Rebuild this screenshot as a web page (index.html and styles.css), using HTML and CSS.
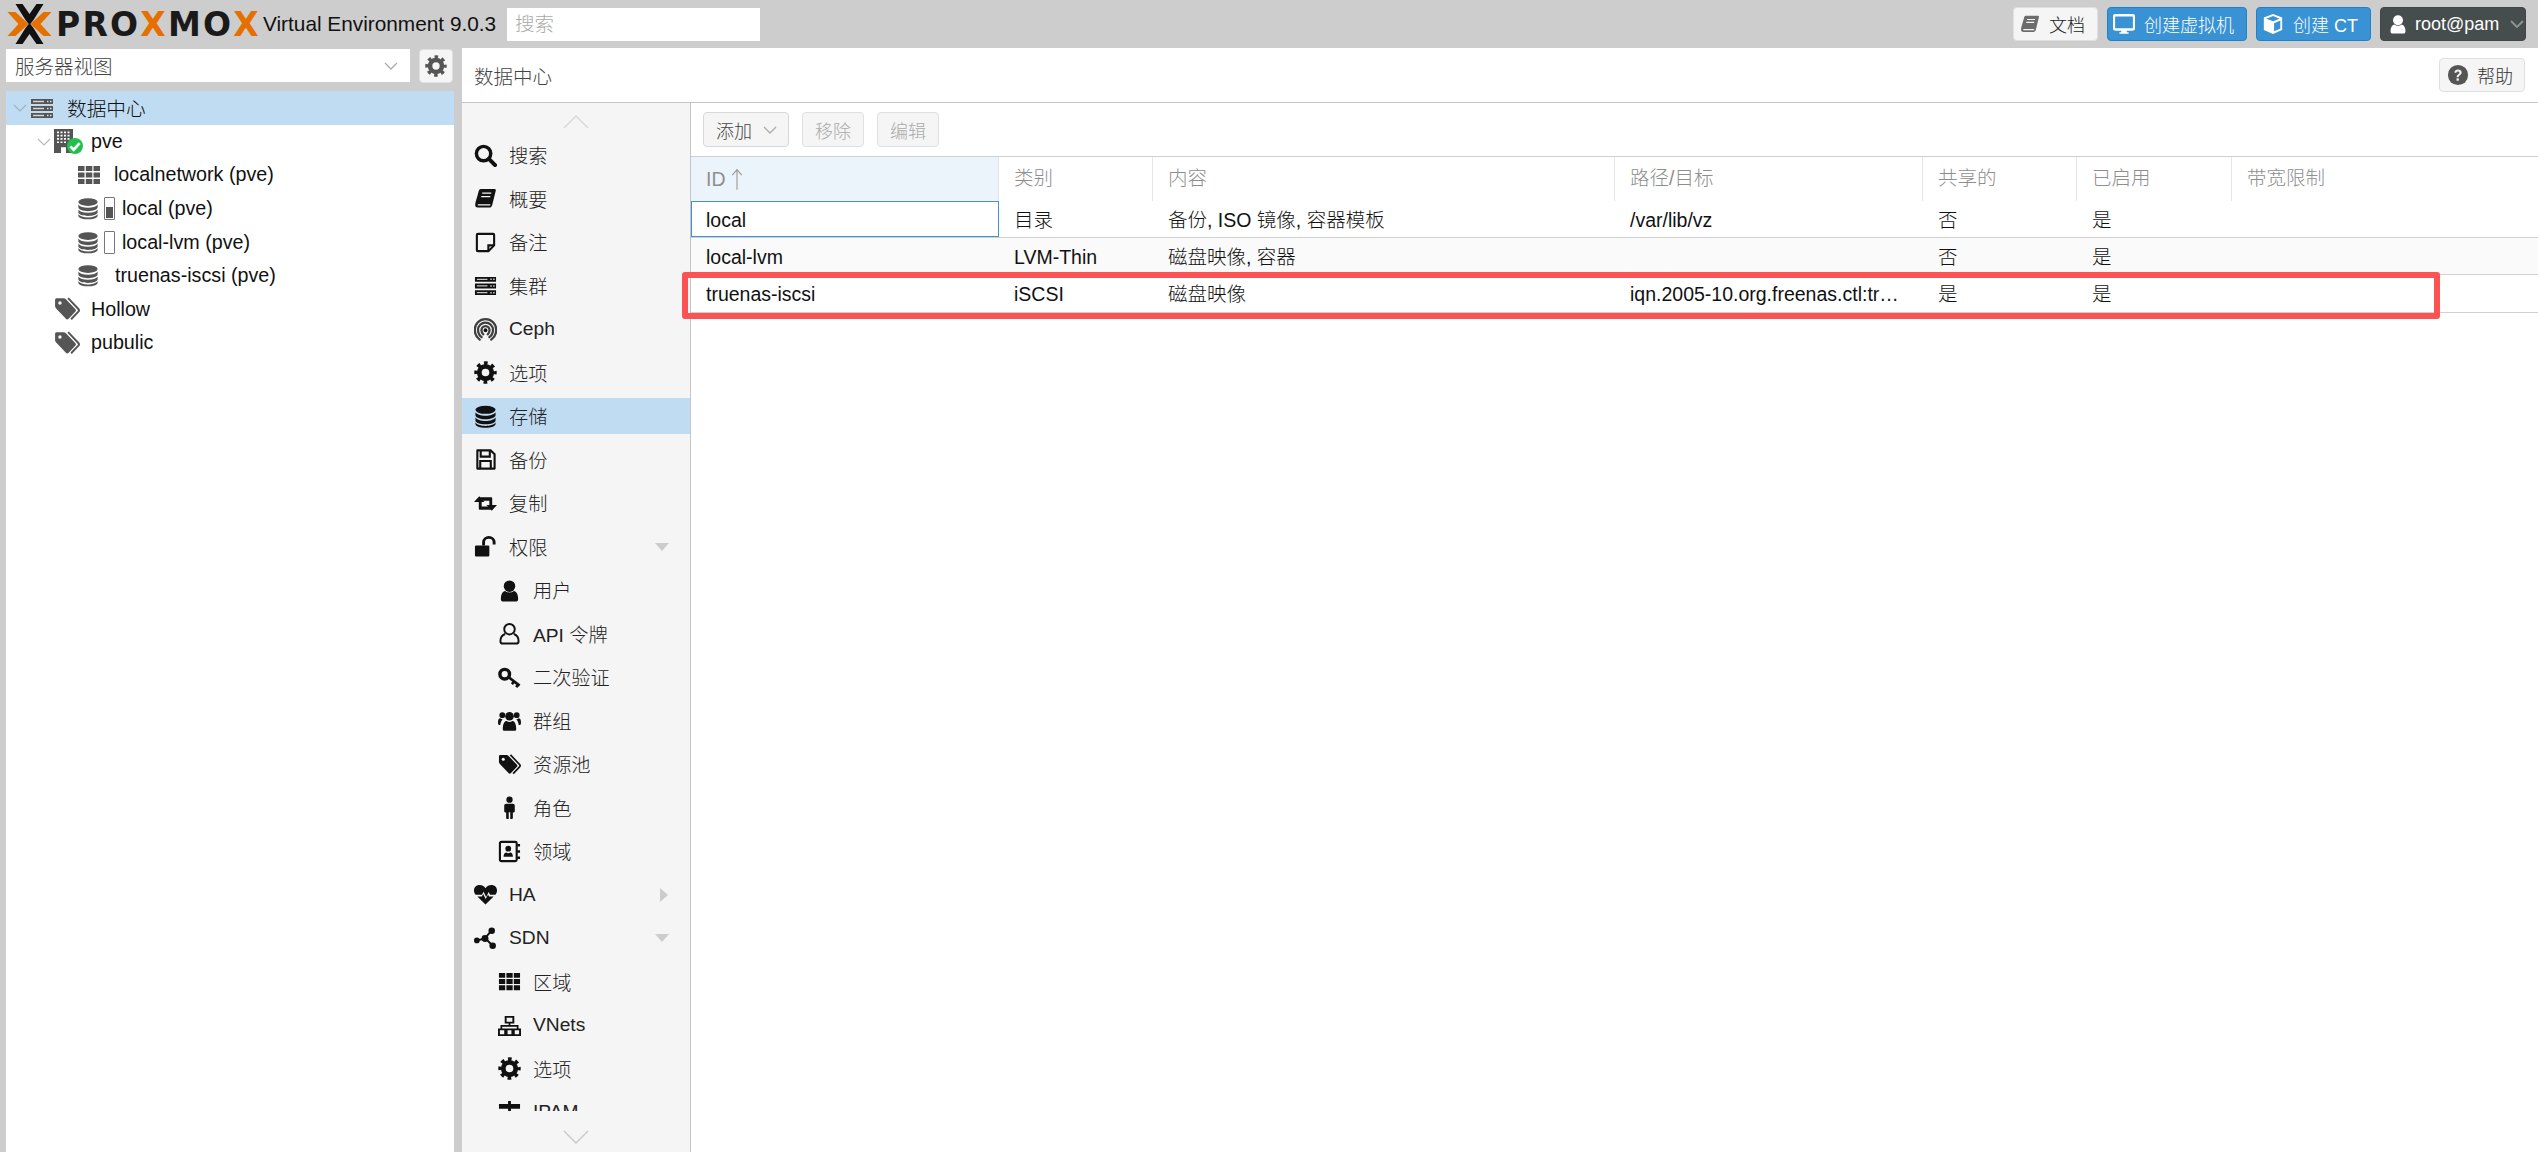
FILE: index.html
```html
<!DOCTYPE html>
<html lang="zh-CN">
<head>
<meta charset="utf-8">
<title>Proxmox Virtual Environment</title>
<link rel="stylesheet" href="styles.css">
</head>
<body>
<svg class="sprite" width="0" height="0" aria-hidden="true">
<defs>
<symbol id="i-search" viewBox="0 0 24 24"><circle cx="10" cy="10" r="7.5" fill="none" stroke="currentColor" stroke-width="3.6"/><path d="M15.5 15.5L22 22" stroke="currentColor" stroke-width="4.2" stroke-linecap="round"/></symbol>
<symbol id="i-book" viewBox="0 0 24 24"><path d="M7 2h14.500c1 0 1.500.8 1.200 1.800l-3.700 15c-.4 1.500-1.200 2.700-3 2.700H4c-2 0-3-1.500-2.700-3.500C1.500 16 4 8 5 4c.3-1.200 1-2 2-2z" fill="currentColor"/><path d="M8.500 6.500h9.500M7.500 10h9.500M4 18.700h13" stroke="#f5f5f5" stroke-width="1.300" fill="none"/></symbol>
<symbol id="i-note" viewBox="0 0 24 24"><path d="M4 3h16c.6 0 1 .4 1 1v11l-6 6H4c-.6 0-1-.4-1-1V4c0-.6.4-1 1-1z" fill="none" stroke="currentColor" stroke-width="2.200"/><path d="M20.500 15h-5.500v5.500" fill="none" stroke="currentColor" stroke-width="2.200"/></symbol>
<symbol id="i-server" viewBox="0 0 24 24"><path d="M1 3h22v5H1zM1 10h22v5H1zM1 17h22v5H1z" fill="currentColor"/><path d="M3 5.500h11M3 12.500h11M3 19.500h11" stroke="#fff" stroke-opacity=".75" stroke-width="1.300"/><path d="M17 5.500h1.500M20 5.500h1.500M17 12.500h1.500M20 12.500h1.500M17 19.500h1.500M20 19.500h1.500" stroke="#fff" stroke-opacity=".8" stroke-width="1.500"/></symbol>
<symbol id="i-ceph" viewBox="0 0 24 24"><g fill="none" stroke="currentColor" stroke-linecap="round" stroke-opacity=".8"><path d="M6 22.500C2.500 20 .8 16.500.8 12.300.8 6.200 5.800 1.200 12 1.200s11.200 5 11.200 11.100c0 4.200-1.700 7.700-5.200 10.200" stroke-width="2.400"/><path d="M8 20c-2.500-1.900-3.800-4.500-3.800-7.500C4.200 8.200 7.700 4.800 12 4.800s7.800 3.400 7.800 7.700c0 3-1.300 5.600-3.800 7.500" stroke-width="2.400"/><path d="M9.700 17C8.400 15.900 7.800 14.300 7.800 12.700 7.800 10.300 9.600 8.400 12 8.400s4.200 1.900 4.200 4.300c0 1.600-.6 3.200-1.900 4.300" stroke-width="2.400"/></g><circle cx="12" cy="12.800" r="2" fill="currentColor"/></symbol>
<symbol id="i-gear" viewBox="0 0 24 24"><circle cx="12" cy="12" r="6.500" fill="none" stroke="currentColor" stroke-width="5"/><circle cx="12" cy="12" r="9.800" fill="none" stroke="currentColor" stroke-width="3.800" stroke-dasharray="3.800 3.900" stroke-dashoffset="1.900"/></symbol>
<symbol id="i-db" viewBox="0 0 24 24"><ellipse cx="12" cy="5" rx="10.500" ry="4.200" fill="currentColor"/><path d="M1.500 7.500v3.200c0 2.300 4.700 4.200 10.500 4.200s10.500-1.900 10.500-4.200V7.500c-1.500 2.300-5.500 3.600-10.500 3.600S3 9.800 1.500 7.500z" fill="currentColor"/><path d="M1.500 13v3.200c0 2.300 4.700 4 10.500 4s10.500-1.700 10.500-4V13c-1.500 2.300-5.500 3.600-10.500 3.600S3 15.300 1.500 13z" fill="currentColor"/><path d="M1.500 18.300v1.500c0 2.300 4.700 4 10.500 4s10.500-1.700 10.500-4v-1.500c-1.500 2.200-5.500 3.500-10.500 3.500s-9-1.300-10.500-3.500z" fill="currentColor"/></symbol>
<symbol id="i-save" viewBox="0 0 24 24"><path d="M3.500 2.500h14l4 4v15h-18z" fill="none" stroke="currentColor" stroke-width="2.200" stroke-linejoin="round"/><path d="M7 3v6h9.500V3M6.500 21v-7.500h11V21" fill="none" stroke="currentColor" stroke-width="2.200"/></symbol>
<symbol id="i-retweet" viewBox="0 0 24 24"><path d="M0 10.500l5.500-6 5.500 6H8V15h7l3 3.500H6c-.7 0-1-.4-1-1v-7z" fill="currentColor"/><path d="M24 13.500l-5.500 6-5.500-6h3V9H9L6 5.500h12c.7 0 1 .4 1 1v7z" fill="currentColor"/></symbol>
<symbol id="i-unlock" viewBox="0 0 24 24"><rect x="1" y="11" width="15" height="11.500" rx="1.200" fill="currentColor"/><path d="M10 11V7.500C10 4.500 12.500 2.500 15.500 2.500S21 4.500 21 7.500V10" fill="none" stroke="currentColor" stroke-width="3"/></symbol>
<symbol id="i-user" viewBox="0 0 24 24"><circle cx="12" cy="7.500" r="6" fill="currentColor"/><path d="M3 21c0-5 1.700-8 4.500-8.500C9 13.700 10.500 14 12 14s3-.3 4.500-1.500C19.300 13 21 16 21 21c0 1.500-1 2.500-2.500 2.500h-13C4 23.500 3 22.500 3 21z" fill="currentColor"/></symbol>
<symbol id="i-user-o" viewBox="0 0 24 24"><circle cx="12" cy="7.500" r="5.500" fill="none" stroke="currentColor" stroke-width="2"/><path d="M7.500 12.500C4.500 13.500 2.500 16 2.500 20c0 1.500 1 2.500 2.500 2.500h14c1.500 0 2.500-1 2.500-2.500 0-4-2-6.500-5-7.500" fill="none" stroke="currentColor" stroke-width="2"/></symbol>
<symbol id="i-key" viewBox="0 0 24 24"><circle cx="7" cy="8.500" r="5" fill="none" stroke="currentColor" stroke-width="3.600"/><path d="M11.500 12l11 8.500M17 16l-2.500 3M21 19.500l-2 2.500" fill="none" stroke="currentColor" stroke-width="2.800"/></symbol>
<symbol id="i-users" viewBox="0 0 24 24"><circle cx="12" cy="7.500" r="4.500" fill="currentColor"/><circle cx="4.500" cy="6.500" r="3" fill="currentColor"/><circle cx="19.500" cy="6.500" r="3" fill="currentColor"/><path d="M5 21c0-6 2-8.500 4-8.500 1 .8 2 1.100 3 1.100s2-.3 3-1.100c2 0 4 2.500 4 8.500 0 1-.7 1.700-1.800 1.700H6.800C5.700 22.700 5 22 5 21z" fill="currentColor"/><path d="M0 14c0-2.700.8-4.300 2.300-4.300.8.600 1.500.9 2.500.9-1.200 1.500-2.200 3.400-2.400 6H1.200C.5 16.600 0 15.800 0 14zM24 14c0-2.700-.8-4.300-2.300-4.300-.8.600-1.500.9-2.500.9 1.200 1.500 2.200 3.400 2.400 6h1.200c.7 0 1.200-.8 1.200-2.600z" fill="currentColor"/></symbol>
<symbol id="i-tags" viewBox="0 0 24 24"><path d="M1 3.500c0-.8.500-1.500 1.300-1.500H9c.6 0 1.300.3 1.800.8l9 9.500c.6.600.6 1.500 0 2.100l-6.500 6.800c-.6.600-1.500.6-2.100 0l-9-9.500C1.700 11.200 1 10.300 1 9.500z" fill="currentColor"/><circle cx="5.500" cy="6.500" r="1.600" fill="#f5f5f5"/><path d="M13 2l9.500 10c.7.800.7 1.700 0 2.400L15.800 21.500" fill="none" stroke="currentColor" stroke-width="1.800"/></symbol>
<symbol id="i-male" viewBox="0 0 24 24"><circle cx="12" cy="3.800" r="3.300" fill="currentColor"/><path d="M8.500 8h7c1.200 0 2 .8 2 2v6c0 .7-.5 1.200-1.200 1.200h-.8V23a1 1 0 0 1-1 1h-1.700v-7h-1.600v7H9.500a1 1 0 0 1-1-1v-5.800h-.8c-.7 0-1.200-.5-1.200-1.200v-6c0-1.200.8-2 2-2z" fill="currentColor"/></symbol>
<symbol id="i-addr" viewBox="0 0 24 24"><rect x="2" y="2" width="17.500" height="20" rx="1.500" fill="none" stroke="currentColor" stroke-width="2.200"/><circle cx="10.700" cy="9" r="3" fill="currentColor"/><path d="M5.800 17.500c0-3 1.500-4.500 2.800-4.500.8.500 1.400.7 2.100.7s1.300-.2 2.100-.7c1.300 0 2.800 1.500 2.800 4.500z" fill="currentColor"/><path d="M20 5.500h3M20 12h3M20 18.500h3" stroke="currentColor" stroke-width="2.400"/></symbol>
<symbol id="i-heart" viewBox="0 0 24 24"><path d="M12 22.500L3.500 14h4.700l1.400-2.500 2.600 5.300 2.500-4.800.9 2h4.900z" fill="currentColor"/><path d="M1.700 12.300C.6 10.800 0 9.500 0 7.800 0 4.500 2.500 2.200 5.800 2.200c2.500 0 4.700 1.300 6.200 3.300 1.500-2 3.700-3.300 6.200-3.300C21.500 2.200 24 4.500 24 7.800c0 1.700-.6 3-1.700 4.500h-5.600l-1.400-2.800-2.600 5-2.700-5.500-1.700 3.300z" fill="currentColor"/></symbol>
<symbol id="i-sdn" viewBox="0 0 24 24"><path d="M3.500 14l8-2M12 11l6-7M12 12l7 7" stroke="currentColor" stroke-width="2" fill="none"/><circle cx="3" cy="14" r="3" fill="currentColor"/><circle cx="11.500" cy="12" r="3.600" fill="currentColor"/><circle cx="18.500" cy="4" r="3.400" fill="currentColor"/><circle cx="19.500" cy="19.500" r="3.400" fill="currentColor"/></symbol>
<symbol id="i-th" viewBox="0 0 24 24"><path d="M1 3h6.500v5H1zM8.800 3h6.500v5H8.800zM16.500 3H23v5h-6.500zM1 9.500h6.500v5H1zM8.800 9.500h6.500v5H8.800zM16.500 9.500H23v5h-6.500zM1 16h6.500v5H1zM8.800 16h6.500v5H8.800zM16.500 16H23v5h-6.500z" fill="currentColor"/></symbol>
<symbol id="i-sitemap" viewBox="0 0 24 24"><path d="M8 3h8v6H8z" fill="none" stroke="currentColor" stroke-width="2"/><path d="M12 9v3M3.500 16v-3.500h17V16" fill="none" stroke="currentColor" stroke-width="1.800"/><path d="M1 16h6.500v6H1zM16.500 16H23v6h-6.500zM9 16h6v6H9z" fill="none" stroke="currentColor" stroke-width="2"/></symbol>
<symbol id="i-sign" viewBox="0 0 24 24"><path d="M1 3h22v5H1zM10.500 0h3v24h-3z" fill="currentColor"/></symbol>
<symbol id="i-desktop" viewBox="0 0 24 24"><rect x="1" y="2.500" width="22" height="15.500" rx="1.800" fill="none" stroke="currentColor" stroke-width="2.600"/><path d="M9 18h6v3h2v1.500H7V21h2z" fill="currentColor"/></symbol>
<symbol id="i-cube" viewBox="0 0 24 24"><path d="M12 1l10 4v13.500L12 23 2 18.500V5z" fill="currentColor"/><path d="M4.800 6.200L12 3.400l7.200 2.800L12 9zM13.200 11.200l6.800-2.900V17l-6.800 3z" fill="#3892d4"/></symbol>
<symbol id="i-help" viewBox="0 0 24 24"><circle cx="12" cy="12" r="11" fill="currentColor"/><path d="M8 9.300c.3-2 1.900-3.200 4-3.200 2.300 0 4 1.400 4 3.300 0 2.900-3.200 2.700-3.200 5.100h-2.300c0-3.500 3-3.300 3-5 0-.8-.7-1.300-1.600-1.300-1 0-1.500.6-1.800 1.500z" fill="#f5f5f5"/><rect x="10.400" y="15.700" width="2.500" height="2.500" fill="#f5f5f5"/></symbol>
<symbol id="i-node" viewBox="0 0 19 29" preserveAspectRatio="none"><path d="M0 0h19v29H0z" fill="currentColor"/><path d="M3 3h2v2H3zM6.500 3h2v2h-2zM10 3h2v2h-2zM13.500 3h2v2h-2zM3 7h2v2H3zM6.500 7h2v2h-2zM10 7h2v2h-2zM13.500 7h2v2h-2zM3 11h2v2H3zM6.500 11h2v2h-2zM10 11h2v2h-2zM13.500 11h2v2h-2zM3 15h2v2H3zM6.500 15h2v2h-2zM10 15h2v2h-2zM7 22h5v7H7z" fill="#fff"/></symbol>
</defs>
</svg>

<header class="topbar">
  <svg class="logo-x" viewBox="0 0 44 40" aria-hidden="true">
    <path d="M8 0h7l7 10 7-10h7L26 16l-4 5-4-5z" fill="#111"/>
    <path d="M8 40h7l7-10 7 10h7L26 24l-4-5-4 5z" fill="#111"/>
    <path d="M0 8h8l13 12L8 32H0l11-12z" fill="#e57000"/>
    <path d="M44 8h-8L23 20l13 12h8L33 20z" fill="#e57000"/>
  </svg>
  <span class="logo-word">PRO<b>X</b>MO<b>X</b></span>
  <span class="version">Virtual Environment 9.0.3</span>
  <div class="global-search">搜索</div>
  <div class="top-actions">
    <div class="btn btn-plain top-doc"><svg class="ic-16 grey"><use href="#i-book"/></svg>文档</div>
    <div class="btn btn-blue top-vm"><svg class="ic-20"><use href="#i-desktop"/></svg>创建虚拟机</div>
    <div class="btn btn-blue top-ct"><svg class="ic-20"><use href="#i-cube"/></svg>创建 CT</div>
    <div class="btn btn-dark top-user"><svg class="ic-18"><use href="#i-user"/></svg>root@pam<svg class="chev chev-dark" viewBox="0 0 14 8"><path d="M1 1l6 6 6-6" fill="none" stroke="currentColor" stroke-width="2"/></svg></div>
  </div>
</header>

<div class="workspace">
  <aside class="side">
    <div class="view-bar">
      <div class="view-select">服务器视图<svg class="chev" viewBox="0 0 14 8"><path d="M1 1l6 6 6-6" fill="none" stroke="currentColor" stroke-width="1.300"/></svg></div>
      <div class="btn btn-plain gear-btn"><svg class="ic-20 grey-d"><use href="#i-gear"/></svg></div>
    </div>
    <div class="tree">
      <div class="tree-row selected">
        <svg class="tree-chev" viewBox="0 0 14 8"><path d="M1 1l6 6 6-6" fill="none" stroke="currentColor" stroke-width="1.200"/></svg>
        <svg class="tree-ic"><use href="#i-server"/></svg><span class="tree-t0">数据中心</span>
      </div>
      <div class="tree-row l1">
        <svg class="tree-chev" viewBox="0 0 14 8"><path d="M1 1l6 6 6-6" fill="none" stroke="currentColor" stroke-width="1.200"/></svg>
        <span class="node-wrap"><svg class="node-ic"><use href="#i-node"/></svg><span class="ok-badge"><svg viewBox="0 0 12 12"><path d="M2.500 6.300l2.500 2.500 4.500-5" fill="none" stroke="#fff" stroke-width="2"/></svg></span></span><span>pve</span>
      </div>
      <div class="tree-row l2"><svg class="tree-ic"><use href="#i-th"/></svg><span class="tree-t">localnetwork (pve)</span></div>
      <div class="tree-row l2"><svg class="tree-ic db"><use href="#i-db"/></svg><span class="usage"><i class="usage-fill fill-60"></i></span><span>local (pve)</span></div>
      <div class="tree-row l2"><svg class="tree-ic db"><use href="#i-db"/></svg><span class="usage"></span><span>local-lvm (pve)</span></div>
      <div class="tree-row l2"><svg class="tree-ic db db-only"><use href="#i-db"/></svg><span class="tree-t">truenas-iscsi (pve)</span></div>
      <div class="tree-row l1 tag"><svg class="tree-ic"><use href="#i-tags"/></svg><span>Hollow</span></div>
      <div class="tree-row l1 tag"><svg class="tree-ic"><use href="#i-tags"/></svg><span>pubulic</span></div>
    </div>
  </aside>

  <main class="content">
    <div class="title-bar"><span>数据中心</span><div class="btn btn-plain help-btn"><svg class="ic-20 grey-d"><use href="#i-help"/></svg>帮助</div></div>
    <div class="panel">
      <nav class="nav">
        <div class="nav-arrow nav-up"><svg viewBox="0 0 26 14"><path d="M1 13L13 1l12 12" fill="none" stroke="currentColor" stroke-width="1.400"/></svg></div>
        <div class="nav-list">
          <div class="nav-item"><svg class="nav-ic"><use href="#i-search"/></svg>搜索</div>
          <div class="nav-item"><svg class="nav-ic"><use href="#i-book"/></svg>概要</div>
          <div class="nav-item"><svg class="nav-ic"><use href="#i-note"/></svg>备注</div>
          <div class="nav-item"><svg class="nav-ic"><use href="#i-server"/></svg>集群</div>
          <div class="nav-item"><svg class="nav-ic"><use href="#i-ceph"/></svg>Ceph</div>
          <div class="nav-item"><svg class="nav-ic"><use href="#i-gear"/></svg>选项</div>
          <div class="nav-item active"><svg class="nav-ic"><use href="#i-db"/></svg>存储</div>
          <div class="nav-item"><svg class="nav-ic"><use href="#i-save"/></svg>备份</div>
          <div class="nav-item"><svg class="nav-ic"><use href="#i-retweet"/></svg>复制</div>
          <div class="nav-item"><svg class="nav-ic"><use href="#i-unlock"/></svg>权限<i class="tri tri-down"></i></div>
          <div class="nav-item sub"><svg class="nav-ic"><use href="#i-user"/></svg>用户</div>
          <div class="nav-item sub"><svg class="nav-ic"><use href="#i-user-o"/></svg>API 令牌</div>
          <div class="nav-item sub"><svg class="nav-ic"><use href="#i-key"/></svg>二次验证</div>
          <div class="nav-item sub"><svg class="nav-ic"><use href="#i-users"/></svg>群组</div>
          <div class="nav-item sub"><svg class="nav-ic"><use href="#i-tags"/></svg>资源池</div>
          <div class="nav-item sub"><svg class="nav-ic"><use href="#i-male"/></svg>角色</div>
          <div class="nav-item sub"><svg class="nav-ic"><use href="#i-addr"/></svg>领域</div>
          <div class="nav-item"><svg class="nav-ic"><use href="#i-heart"/></svg>HA<i class="tri tri-right"></i></div>
          <div class="nav-item"><svg class="nav-ic"><use href="#i-sdn"/></svg>SDN<i class="tri tri-down"></i></div>
          <div class="nav-item sub"><svg class="nav-ic"><use href="#i-th"/></svg>区域</div>
          <div class="nav-item sub"><svg class="nav-ic"><use href="#i-sitemap"/></svg>VNets</div>
          <div class="nav-item sub"><svg class="nav-ic"><use href="#i-gear"/></svg>选项</div>
          <div class="nav-item sub"><svg class="nav-ic"><use href="#i-sign"/></svg>IPAM</div>
        </div>
        <div class="nav-arrow nav-down"><svg viewBox="0 0 26 14"><path d="M1 1l12 12L25 1" fill="none" stroke="currentColor" stroke-width="1.400"/></svg></div>
      </nav>
      <section class="grid-panel">
        <div class="toolbar">
          <div class="btn btn-plain tool-add">添加<svg class="chev" viewBox="0 0 14 8"><path d="M1 1l6 6 6-6" fill="none" stroke="currentColor" stroke-width="1.300"/></svg></div>
          <div class="btn btn-plain tool-off">移除</div>
          <div class="btn btn-plain tool-off">编辑</div>
        </div>
        <div class="row head">
          <div class="cell sorted">ID<svg class="sort" viewBox="0 0 14 26"><path d="M7 25V2M1.500 8L7 1.500 12.500 8" fill="none" stroke="currentColor" stroke-width="1.300"/></svg></div>
          <div class="cell">类别</div><div class="cell">内容</div><div class="cell">路径/目标</div><div class="cell">共享的</div><div class="cell">已启用</div><div class="cell">带宽限制</div>
        </div>
        <div class="row">
          <div class="cell focus">local</div><div class="cell">目录</div><div class="cell">备份, ISO 镜像, 容器模板</div><div class="cell">/var/lib/vz</div><div class="cell">否</div><div class="cell">是</div><div class="cell"></div>
        </div>
        <div class="row alt">
          <div class="cell">local-lvm</div><div class="cell">LVM-Thin</div><div class="cell">磁盘映像, 容器</div><div class="cell"></div><div class="cell">否</div><div class="cell">是</div><div class="cell"></div>
        </div>
        <div class="row">
          <div class="cell">truenas-iscsi</div><div class="cell">iSCSI</div><div class="cell">磁盘映像</div><div class="cell">iqn.2005-10.org.freenas.ctl:truenas-target</div><div class="cell">是</div><div class="cell">是</div><div class="cell"></div>
        </div>
      </section>
    </div>
  </main>
</div>
<div class="annotation"></div>
</body>
</html>
```

FILE: styles.css
```css
* { box-sizing: border-box; }
html, body { margin: 0; height: 100%; overflow: hidden; }
body {
  background: #cdcdcd;
  color: #111;
  font-family: "Liberation Sans", "Noto Sans CJK SC", sans-serif;
  font-size: 19.5px;
  font-weight: 300;
  position: relative;
}
.sprite { position: absolute; }

/* top bar */
.topbar { height: 48px; display: flex; align-items: center; padding-left: 7px; }
.logo-x { width: 45px; height: 40px; flex: none; }
.logo-word {
  margin-left: 4px;
  font-family: "DejaVu Sans", sans-serif;
  font-weight: bold;
  font-size: 33px;
  letter-spacing: 2.200px;
  width: 207px;
  color: #1a1a1a;
  line-height: 1;
}
.logo-word b { color: #e57000; }
.version { color: #111; width: 244px; white-space: nowrap; font-size: 20.8px; }
.global-search {
  width: 253px; height: 33px; background: #fff; color: #aaa;
  padding-left: 8px; line-height: 33px;
}
.top-actions { margin-left: auto; display: flex; gap: 9px; padding-right: 12px; }

.btn {
  display: flex; align-items: center; height: 34px; border-radius: 4px;
  border: 1px solid #e0e0e0; white-space: nowrap; font-size: 18px;
}
.btn-plain { background: #f5f5f5; color: #333; }
.btn-blue { background: #3892d4; border-color: #1f82c9; color: #fff; }
.btn-dark { background: #464d4d; border-color: #3f4646; color: #fff; }
.top-doc { width: 85px; padding-left: 6px; gap: 9px; color: #222; }
.top-vm { width: 140px; padding-left: 5px; gap: 9px; }
.top-ct { width: 115px; padding-left: 5px; gap: 9px; }
.top-user { width: 146px; padding-left: 7px; gap: 7px; }
.top-user .chev { margin-left: auto; margin-right: 1px; }
.ic-16 { width: 20px; height: 20px; flex: none; }
.ic-18 { width: 20px; height: 22px; flex: none; }
.ic-20 { width: 22px; height: 22px; flex: none; }
.grey { color: #6c6c6c; }
.grey-d { color: #555; }
.chev { width: 14px; height: 8px; color: #aaa; flex: none; }
.chev-dark { color: #8b9090; }

/* side tree */
.workspace { display: flex; height: 1104px; padding-left: 6px; }
.side { width: 448px; flex: none; display: flex; flex-direction: column; }
.view-bar { height: 43px; padding-top: 1px; display: flex; gap: 9px; }
.view-select {
  width: 404px; height: 33px; background: #fff; color: #444;
  display: flex; align-items: center; justify-content: space-between;
  padding: 0 12px 0 9px;
}
.gear-btn { width: 34px; justify-content: center; }
.tree { flex: 1; background: #fff; font-size: 19.7px; }
.tree-row { height: 33.6px; display: flex; align-items: center; white-space: nowrap; position: relative; padding-left: 24px; }
.tree-row.selected { background: #c0dcf2; }
.tree-chev { width: 14px; height: 8px; color: #bbb; position: absolute; left: 7px; top: 13px; }
.selected .tree-chev { color: #9fb2c2; }
.tree-ic { width: 24px; height: 24px; color: #555; flex: none; margin-right: 13px; }
.l1 { padding-left: 48px; }
.l1 .tree-chev { left: 31px; }
.l2 { padding-left: 71px; }
.l2 .tree-ic { margin-right: 13px; }
.l2 .tree-ic.db { width: 22px; height: 25px; margin-right: 5px; }
.l2 .tree-ic.db-only { margin-right: 16px; }
.tag .tree-ic { width: 26px; height: 26px; margin-right: 11px; }
.node-wrap { width: 37px; height: 24px; position: relative; flex: none; }
.node-ic { width: 19px; height: 24px; color: #555; display: block; }
.ok-badge {
  position: absolute; left: 13px; top: 9px; width: 16px; height: 16px;
  border-radius: 50%; background: #21bf4b; display: block;
}
.ok-badge svg { width: 16px; height: 16px; display: block; }
.usage {
  width: 11px; height: 23px; border: 1px solid #777; border-radius: 1px;
  background: #fff; margin-right: 7px; flex: none; display: flex; align-items: flex-end; padding: 1px;
}
.usage-fill { display: block; width: 100%; background: #555; }
.fill-60 { height: 60%; }

/* content */
.content { flex: 1; margin-left: 8px; background: #fff; display: flex; flex-direction: column; min-width: 0; }
.title-bar {
  height: 55px; flex: none; display: flex; align-items: center; justify-content: space-between;
  padding: 0 13px 0 12px; border-bottom: 1px solid #c5c5c5; color: #444;
}
.help-btn { width: 86px; padding-left: 7px; gap: 8px; }
.panel { flex: 1; display: flex; min-height: 0; }

/* nav */
.nav {
  width: 229px; flex: none; background: #f5f5f5; border-right: 1px solid #c5c5c5;
  display: flex; flex-direction: column;
}
.nav-arrow { display: flex; justify-content: center; color: #d8d8d8; flex: none; }
.nav-arrow svg { width: 26px; height: 14px; }
.nav-up { height: 34px; padding-top: 12px; }
.nav-down { height: 41px; padding-top: 19px; color: #c9c9c9; }
.nav-list { flex: 1; overflow: hidden; display: flex; flex-direction: column; gap: 7.52px; min-height: 0; }
.nav-item {
  height: 36px; flex: none; display: flex; align-items: center; position: relative;
  padding-left: 12px; color: #222; white-space: nowrap; width: 228px; font-size: 19.2px;
}
.nav-item.active { background: #c0dcf2; }
.nav-item.sub { padding-left: 36px; }
.nav-ic { width: 23px; height: 23px; color: #111; flex: none; margin-right: 12px; }
.tri { position: absolute; width: 0; height: 0; border-style: solid; }
.tri-down { right: 21px; top: 14px; border-width: 8px 7px 0; border-color: #ccc transparent transparent; }
.tri-right { right: 22px; top: 11px; border-width: 7px 0 7px 8px; border-color: transparent transparent transparent #ccc; }

/* grid */
.grid-panel { flex: 1; min-width: 0; display: flex; flex-direction: column; }
.toolbar { height: 54px; flex: none; display: flex; gap: 13px; align-items: flex-start; padding: 9px 0 0 12px; border-bottom: 1px solid #cfcfcf; }
.tool-add { width: 86px; padding-left: 12px; gap: 11px; color: #444; height: 35px; border-color: #d8d8d8; }
.tool-off { width: 62px; justify-content: center; color: #aaa; height: 35px; }
.row {
  display: grid; grid-template-columns: 308px 154px 462px 308px 154px 155px 1fr;
  height: 37.2px; border-bottom: 1px solid #d0d0d0; flex: none;
}
.row.alt { background: #fafafa; }
.row.head { height: 44px; border-bottom: 0; }
.cell {
  padding: 0 16px 0 15px; line-height: 38px; overflow: hidden; white-space: nowrap;
  min-width: 0; text-overflow: ellipsis; color: #111;
}
.head .cell { border-right: 1px solid #e6e6e6; color: #8e8e8e; line-height: 42px; }
.head .cell:last-child { border-right: 0; }
.cell.sorted { background: #ecf4fb; display: flex; align-items: center; gap: 5px; border-right-color: #e3e3e3; }
.sort { width: 12px; height: 25px; color: #999; flex: none; }
.cell.focus { border: 1px solid #3f93d3; line-height: 36px; padding-left: 14px; }

/* annotation rectangle drawn on top of the screenshot */
.annotation {
  position: absolute; left: 682px; top: 272px; width: 1758px; height: 47px;
  border: 6px solid #fb5353; border-radius: 3px; pointer-events: none;
}
```
